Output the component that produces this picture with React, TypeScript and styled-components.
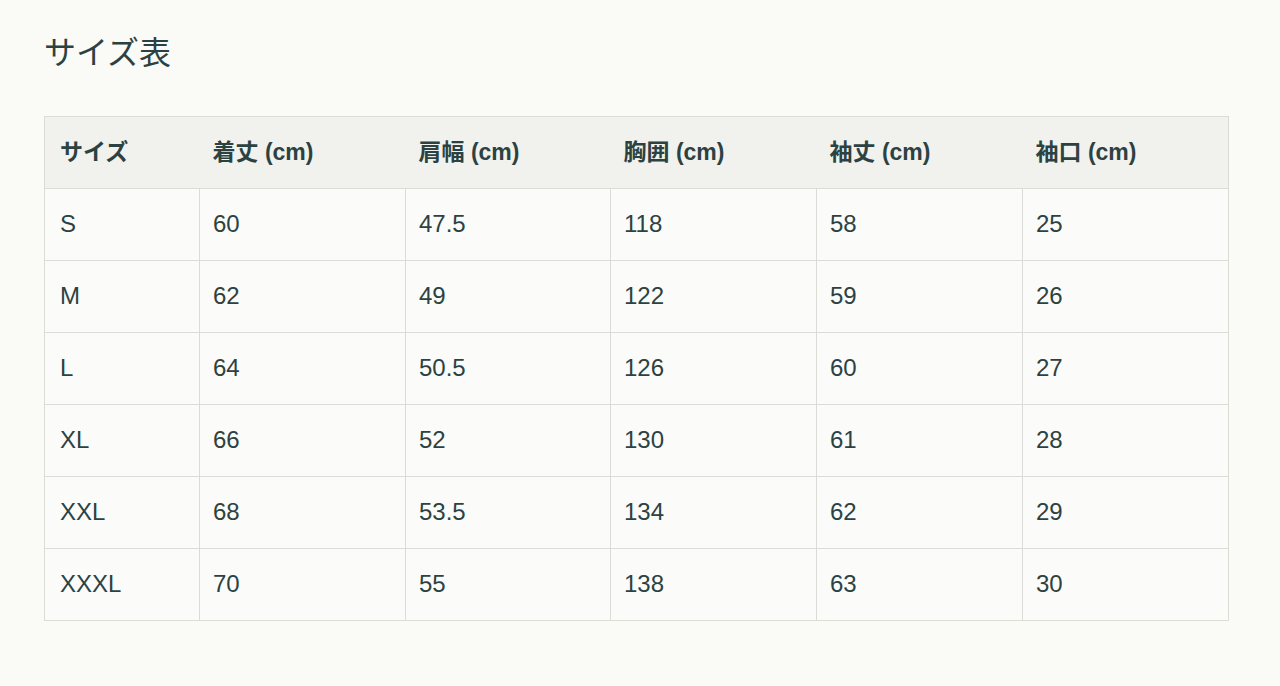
import React from 'react';
import styled, { createGlobalStyle } from 'styled-components';

const GlobalStyle = createGlobalStyle`
  body {
    margin: 0;
    background: #fafaf7;
    font-family: 'Liberation Sans', 'Noto Sans CJK JP', sans-serif;
    color: #2c4242;
  }
`;

const Page = styled.div`
  padding: 30px 52px 40px 44px;
`;

const Title = styled.h2`
  margin: 0 0 46px;
  font-family: 'Noto Sans CJK JP', sans-serif;
  font-size: 32px;
  font-weight: 400;
  line-height: 40px;
  color: #2c4242;
`;

const Table = styled.table`
  width: 1184px;
  border-collapse: collapse;
  table-layout: fixed;
  border: 1px solid #dcdcd6;
  background: #fbfbf9;
`;

const HeadCell = styled.th`
  height: 69px;
  padding: 0 13px 2px;
  text-align: left;
  font-size: 23px;
  line-height: 28px;
  font-weight: 700;
  background: #f1f1ed;
  border-bottom: 1px solid #dcdcd6;

  &:first-child {
    padding-left: 15px;
  }
`;

const Cell = styled.td`
  height: 69px;
  padding: 0 13px 2px;
  font-size: 24px;
  line-height: 28px;
  border: 1px solid #dcdcd6;

  &:first-child {
    padding-left: 15px;
  }
`;

const columns = ['サイズ', '着丈 (cm)', '肩幅 (cm)', '胸囲 (cm)', '袖丈 (cm)', '袖口 (cm)'];
const widths = [155, 206, 205, 206, 206, 206];

const rows = [
  ['S', '60', '47.5', '118', '58', '25'],
  ['M', '62', '49', '122', '59', '26'],
  ['L', '64', '50.5', '126', '60', '27'],
  ['XL', '66', '52', '130', '61', '28'],
  ['XXL', '68', '53.5', '134', '62', '29'],
  ['XXXL', '70', '55', '138', '63', '30'],
];

const App: React.FC = () => {
  return (
    <Page>
      <GlobalStyle />
      <Title>サイズ表</Title>
      <Table>
        <colgroup>
          {widths.map((w, i) => (
            <col key={i} style={{ width: w }} />
          ))}
        </colgroup>
        <thead>
          <tr>
            {columns.map((c) => (
              <HeadCell key={c}>{c}</HeadCell>
            ))}
          </tr>
        </thead>
        <tbody>
          {rows.map((row) => (
            <tr key={row[0]}>
              {row.map((v, i) => (
                <Cell key={i}>{v}</Cell>
              ))}
            </tr>
          ))}
        </tbody>
      </Table>
    </Page>
  );
};

export default App;
